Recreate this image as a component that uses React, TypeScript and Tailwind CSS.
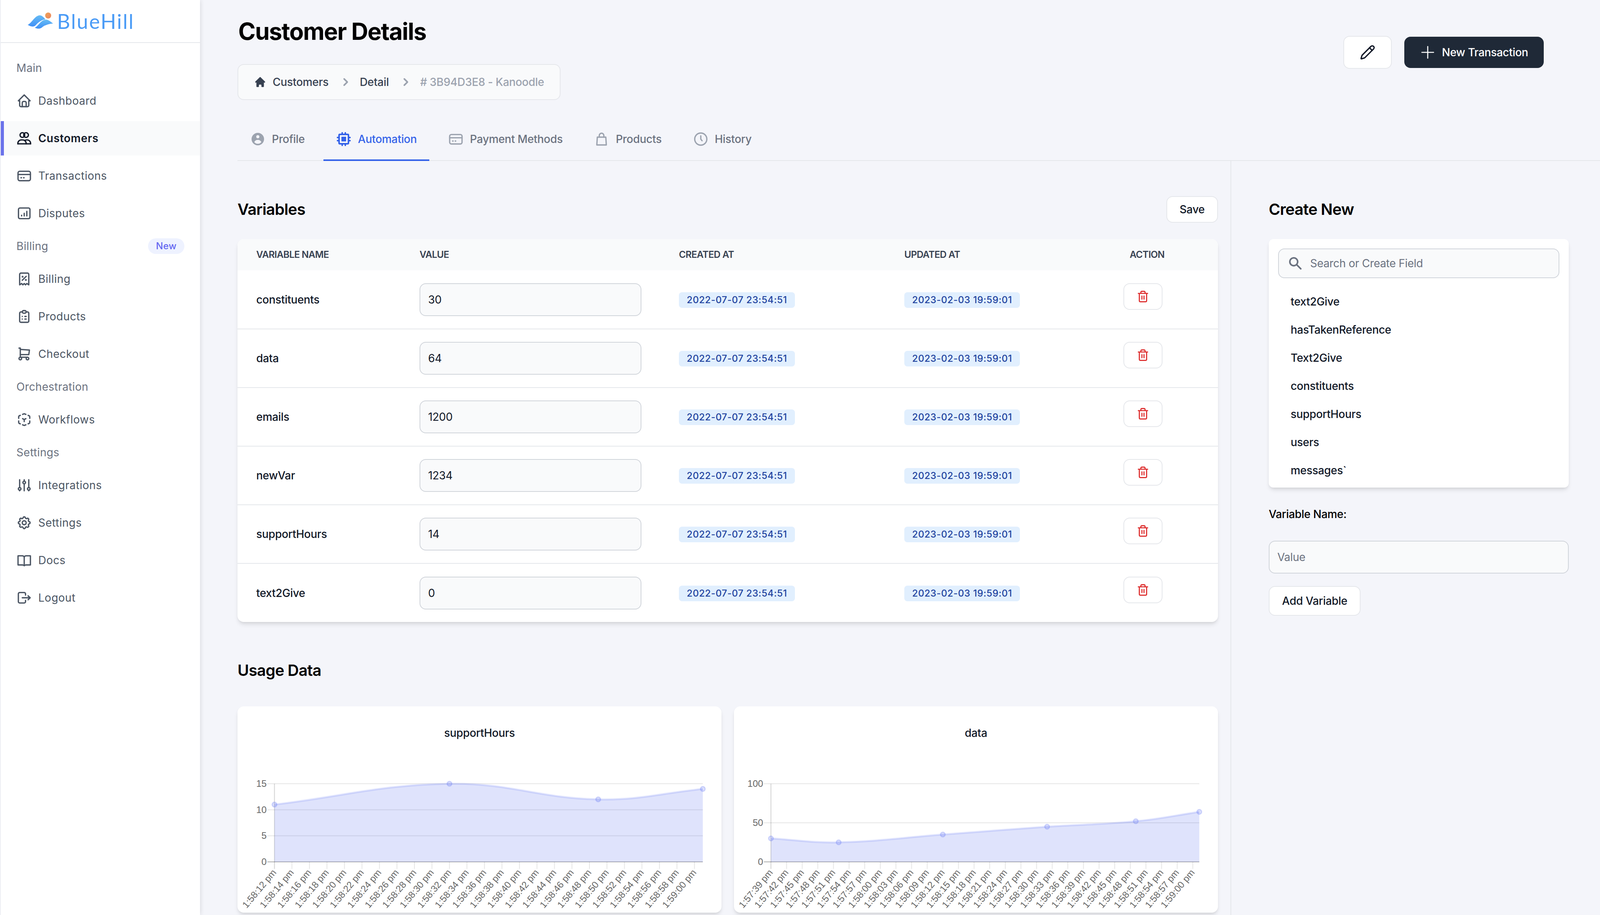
import React from "react";
import { TbHome, TbClipboardList, TbShoppingCart, TbSettings, TbReceiptTax, TbLogout } from "react-icons/tb";
import { Pencil, Trash2 } from "lucide-react";

type SvgP = { className?: string };
const Line = ({ className = "", children }: SvgP & { children: React.ReactNode }) => (
  <svg viewBox="0 0 24 24" fill="none" stroke="currentColor" strokeWidth={2} strokeLinecap="round" strokeLinejoin="round" className={className}>
    {children}
  </svg>
);
const Sol = ({ className = "", d }: SvgP & { d: string }) => (
  <svg viewBox="0 0 20 20" fill="currentColor" className={className}>
    <path fillRule="evenodd" clipRule="evenodd" d={d} />
  </svg>
);

const UsersIcon = ({ className }: SvgP) => (
  <Line className={className}>
    <circle cx="9.2" cy="7" r="3.6" />
    <circle cx="14.8" cy="7" r="3.6" />
    <path d="M2.2 20.5h19.6" />
    <path d="M2.2 20.5v-.8a5.2 5.2 0 015.2-5.2h2.4a5.2 5.2 0 015.2 5.2v.8" />
    <path d="M12.8 15.4a5 5 0 012.8-.9h1a5.2 5.2 0 015.2 5.2v.8" />
  </Line>
);
const CardIcon = ({ className }: SvgP) => (
  <Line className={className}>
    <rect x="2.5" y="5" width="19" height="14.5" rx="2.5" />
    <path d="M2.5 10h19" />
    <path d="M7 15h.8M11 15h.8" />
  </Line>
);
const BarsIcon = ({ className }: SvgP) => (
  <Line className={className}>
    <rect x="3.2" y="3.8" width="17.6" height="16.4" rx="2.2" />
    <path d="M8 16v-1M12 16v-4M16 16V9" />
  </Line>
);
const CubeIcon = ({ className }: SvgP) => (
  <Line className={className}>
    <path d="M9.5 4L12 3l2.5 1M3.5 10V7.5a1.5 1.5 0 011-1.4L6 5.5M18 5.5l1.5.6a1.5 1.5 0 011 1.4V10M20.5 14v2.5a1.5 1.5 0 01-1 1.4l-1.5.6M6 18.5l-1.5-.6a1.5 1.5 0 01-1-1.4V14M9.5 20l2.5 1 2.5-1" />
    <path d="M9.5 10.5l2.5 1.5 2.5-1.5M12 12v3" />
  </Line>
);
const SlidersIcon = ({ className }: SvgP) => (
  <Line className={className}>
    <path d="M5 3.5v12M5 19.5v1M12 3.5v2M12 10v10.5M19 3.5v12M19 19.5v1" />
    <circle cx="5" cy="17.5" r="2" />
    <circle cx="12" cy="7.8" r="2" />
    <circle cx="19" cy="17.5" r="2" />
  </Line>
);
const BookIcon = ({ className }: SvgP) => (
  <Line className={className}>
    <path d="M12 6.8v13.4" />
    <path d="M2.5 5.2h6.2a3.3 3.3 0 013.3 1.8 3.3 3.3 0 013.3-1.8h6.2v14h-7a3.2 3.2 0 00-2.5 1.2 3.2 3.2 0 00-2.5-1.2h-7z" />
  </Line>
);
const ClockIcon = ({ className }: SvgP) => (
  <Line className={className}>
    <circle cx="12" cy="12" r="9.3" />
    <path d="M12 7v5l2 2.5" />
  </Line>
);
const BagIcon = ({ className }: SvgP) => (
  <Line className={className}>
    <path d="M8.5 9V6.5a3.5 3.5 0 017 0V9" />
    <path d="M5.5 9h13l.8 12H4.7z" />
  </Line>
);

const HOME = "M10.707 2.293a1 1 0 00-1.414 0l-7 7a1 1 0 001.414 1.414L4 10.414V17a1 1 0 001 1h2a1 1 0 001-1v-2a1 1 0 011-1h2a1 1 0 011 1v2a1 1 0 001 1h2a1 1 0 001-1v-6.586l.293.293a1 1 0 001.414-1.414l-7-7z";
const CHEV = "M7.293 14.707a1 1 0 010-1.414L10.586 10 7.293 6.707a1 1 0 011.414-1.414l4 4a1 1 0 010 1.414l-4 4a1 1 0 01-1.414 0z";
const USERC = "M18 10a8 8 0 11-16 0 8 8 0 0116 0zm-6-3a2 2 0 11-4 0 2 2 0 014 0zm-2 4a5 5 0 00-4.546 2.916A5.986 5.986 0 0010 16a5.986 5.986 0 004.546-2.084A5 5 0 0010 11z";
const CHIP = "M13 7H7v6h6V7z M7 2a1 1 0 012 0v1h2V2a1 1 0 112 0v1h2a2 2 0 012 2v2h1a1 1 0 110 2h-1v2h1a1 1 0 110 2h-1v2a2 2 0 01-2 2h-2v1a1 1 0 11-2 0v-1H9v1a1 1 0 11-2 0v-1H5a2 2 0 01-2-2v-2H2a1 1 0 110-2h1V9H2a1 1 0 010-2h1V5a2 2 0 012-2h2V2zM5 5h10v10H5V5z";
const SEARCH = "M8 4a4 4 0 100 8 4 4 0 000-8zM2 8a6 6 0 1110.89 3.476l4.817 4.817a1 1 0 01-1.414 1.414l-4.816-4.816A6 6 0 012 8z";

const Logo = () => (
  <svg width="32.5" height="22" viewBox="0 0 65 44">
    <defs>
      <linearGradient id="wave" x1="0" y1="0" x2="0" y2="1">
        <stop offset="0" stopColor="#66bcf4" />
        <stop offset="1" stopColor="#3f8ff6" />
      </linearGradient>
      <linearGradient id="sun" x1="0" y1="0" x2="1" y2="1">
        <stop offset="0" stopColor="#efa356" />
        <stop offset="1" stopColor="#ea8560" />
      </linearGradient>
    </defs>
    <circle cx="52.3" cy="7.7" r="7.7" fill="url(#sun)" />
    <path fill="url(#wave)" d="M0 31.7C10 27 17 10 29 7.3c7-1.3 13 5.7 16 10.4C35 18 24 28 19 34c-6 4-13 1-19-2.3z" />
    <path fill="url(#wave)" d="M18 39c10-5 16-21 29-20.7C54 18.5 60 25 65 28.3 55 29 50 31 42 34c-6 4-10 11-24 5z" />
  </svg>
);

const SectionLabel = ({ text, badge }: { text: string; badge?: string }) => (
  <div className="h-10 pl-5 pr-5 flex items-center justify-between text-sm tracking-[0.012em] text-[#6b7280]">
    <span>{text}</span>
    {badge && <span className="px-2.5 py-0.5 rounded-full bg-[#eef2ff] text-[#6366f1] text-xs font-medium">{badge}</span>}
  </div>
);

const NavItem = ({ icon: I, text, active }: { icon: React.ComponentType<SvgP>; text: string; active?: boolean }) => (
  <div
    className={
      active
        ? "h-11 flex items-center gap-2 border-l-4 border-[#6a72ea] pl-4 bg-[#f9fafb] text-sm font-semibold tracking-wide text-[#111827]"
        : "h-11 flex items-center gap-2 pl-5 text-sm font-normal tracking-[0.018em] text-[#4b5563]"
    }
  >
    <I className="w-5 h-5 shrink-0" />
    <span>{text}</span>
  </div>
);

const Sidebar = () => (
  <aside className="w-64 h-full shrink-0 bg-white border-l border-[#eceef3] shadow-[1px_0_5px_rgba(0,0,0,0.1)] z-10">
    <div className="h-[55px] border-b border-[#e5e7eb] flex items-center pl-[34.5px] gap-[5px]">
      <Logo />
      <span className="[font-family:Lato,sans-serif] text-[26px] leading-none text-[#4a9bf6] tracking-[0.05em]">BlueHill</span>
    </div>
    <nav className="pt-3">
      <SectionLabel text="Main" />
      <div className="flex flex-col gap-1">
        <NavItem icon={TbHome} text="Dashboard" />
        <NavItem icon={UsersIcon} text="Customers" active />
        <NavItem icon={CardIcon} text="Transactions" />
        <NavItem icon={BarsIcon} text="Disputes" />
      </div>
      <SectionLabel text="Billing" badge="New" />
      <div className="flex flex-col gap-1">
        <NavItem icon={TbReceiptTax} text="Billing" />
        <NavItem icon={TbClipboardList} text="Products" />
        <NavItem icon={TbShoppingCart} text="Checkout" />
      </div>
      <SectionLabel text="Orchestration" />
      <div className="flex flex-col gap-1">
        <NavItem icon={CubeIcon} text="Workflows" />
      </div>
      <SectionLabel text="Settings" />
      <div className="flex flex-col gap-1">
        <NavItem icon={SlidersIcon} text="Integrations" />
        <NavItem icon={TbSettings} text="Settings" />
        <NavItem icon={BookIcon} text="Docs" />
        <NavItem icon={TbLogout} text="Logout" />
      </div>
    </nav>
  </aside>
);

const Header = () => (
  <header className="pl-12 pr-[79px] pt-[22px] flex justify-between items-start">
    <div>
      <h1 className="text-3xl font-bold tracking-[-0.025em] text-black pl-px">Customer Details</h1>
      <div className="mt-6 w-fit flex items-center px-5 py-3 border border-[#e5e7eb] rounded-lg bg-[#f9fafb] text-sm font-medium">
        <Sol d={HOME} className="w-4 h-4 mr-2 text-[#374151]" />
        <span className="text-[#374151]">Customers</span>
        <Sol d={CHEV} className="w-5 h-5 ml-3 mr-2 text-[#9ca3af]" />
        <span className="text-[#374151]">Detail</span>
        <Sol d={CHEV} className="w-5 h-5 ml-3 mr-2 text-[#9ca3af]" />
        <span className="text-[#9ca3af]"># 3B94D3E8 - Kanoodle</span>
      </div>
    </div>
    <div className="mt-6 flex items-center gap-4">
      <button className="px-5 py-2.5 bg-white border border-[#e5e7eb] rounded-lg text-[#111827]">
        <Pencil className="w-5 h-5" strokeWidth={2} />
      </button>
      <button className="flex items-center px-5 py-2.5 bg-[#1f2937] rounded-lg text-sm font-medium text-white">
        <svg viewBox="0 0 24 24" fill="none" stroke="currentColor" strokeWidth={1.6} strokeLinecap="round" className="w-5 h-5 mr-2">
          <path d="M12 3v18M3 12h18" />
        </svg>
        New Transaction
      </button>
    </div>
  </header>
);

const Tab = ({ icon, text, active }: { icon: React.ReactNode; text: string; active?: boolean }) => (
  <div
    className={
      active
        ? "flex items-center p-4 border-b-2 border-[#3563e9] text-sm font-medium text-[#3563e9]"
        : "flex items-center p-4 border-b-2 border-transparent text-sm font-medium text-[#6b7280]"
    }
  >
    {icon}
    <span>{text}</span>
  </div>
);

const Tabs = () => (
  <div className="mt-6 ml-12 border-b border-[#e5e7eb]">
    <div className="flex gap-2 -mb-px">
      <Tab icon={<Sol d={USERC} className="w-5 h-5 mr-2 text-[#9ca3af]" />} text="Profile" />
      <Tab active icon={<Sol d={CHIP} className="w-5 h-5 mr-2 text-[#3563e9]" />} text="Automation" />
      <Tab icon={<CardIcon className="w-5 h-5 mr-2 text-[#9ca3af]" />} text="Payment Methods" />
      <Tab icon={<BagIcon className="w-5 h-5 mr-2 text-[#9ca3af]" />} text="Products" />
      <Tab icon={<ClockIcon className="w-5 h-5 mr-2 text-[#9ca3af]" />} text="History" />
    </div>
  </div>
);

const rows: [string, string][] = [
  ["constituents", "30"],
  ["data", "64"],
  ["emails", "1200"],
  ["newVar", "1234"],
  ["supportHours", "14"],
  ["text2Give", "0"],
];

const Badge = ({ text }: { text: string }) => (
  <span className="inline-block px-2.5 py-0.5 rounded bg-[#e1effe] text-[#1e429f] text-xs font-medium whitespace-nowrap tracking-[0.025em]">{text}</span>
);

const VarTable = () => (
  <div className="mt-[21px] bg-white rounded-lg shadow-md overflow-hidden">
    <table className="w-full table-fixed text-sm text-left">
      <thead className="bg-[#f9fafb] text-xs font-semibold uppercase tracking-[-0.03em] text-[#374151]">
        <tr className="h-10">
          <th className="w-[209px] pl-6 font-semibold">Variable Name</th>
          <th className="w-[332px] pl-6 font-semibold">Value</th>
          <th className="w-[288.5px] pl-6 font-semibold">Created At</th>
          <th className="w-[288.5px] pl-6 font-semibold">Updated At</th>
          <th className="pl-6 font-semibold">Action</th>
        </tr>
      </thead>
      <tbody>
        {rows.map(([n, v], i) => (
          <tr key={n} className={i < rows.length - 1 ? "h-[75px] border-b border-[#e5e7eb]" : "h-[75px]"}>
            <td className="pl-6 font-medium text-[#111827]">{n}</td>
            <td className="pl-6">
              <input readOnly defaultValue={v} className="w-[284px] p-2.5 bg-[#f9fafb] border border-[#d1d5db] rounded-lg text-sm text-[#111827]" />
            </td>
            <td className="pl-6"><Badge text="2022-07-07 23:54:51" /></td>
            <td className="pl-6"><Badge text="2023-02-03 19:59:01" /></td>
            <td className="pl-4">
              <button className="block mb-2 px-4 py-2 bg-white border border-[#e5e7eb] rounded-lg text-[#dc2626]">
                <Trash2 className="w-4 h-4" strokeWidth={2} />
              </button>
            </td>
          </tr>
        ))}
      </tbody>
    </table>
  </div>
);

function spline(pts: [number, number][]) {
  const t = 0.4;
  let d = `M${pts[0][0]} ${pts[0][1]}`;
  const cp = pts.map((p, i) => {
    const prev = pts[Math.max(i - 1, 0)];
    const next = pts[Math.min(i + 1, pts.length - 1)];
    const d01 = Math.hypot(p[0] - prev[0], p[1] - prev[1]);
    const d12 = Math.hypot(next[0] - p[0], next[1] - p[1]);
    const s = d01 + d12 || 1;
    const fa = (t * d01) / s;
    const fb = (t * d12) / s;
    return {
      px: p[0] - fa * (next[0] - prev[0]),
      py: p[1] - fa * (next[1] - prev[1]),
      nx: p[0] + fb * (next[0] - prev[0]),
      ny: p[1] + fb * (next[1] - prev[1]),
    };
  });
  for (let i = 1; i < pts.length; i++) {
    d += ` C${cp[i - 1].nx} ${cp[i - 1].ny} ${cp[i].px} ${cp[i].py} ${pts[i][0]} ${pts[i][1]}`;
  }
  return d;
}

const X0 = 47.3;
const X1 = 595.6;
const YT = 23;
const YB = 123;

const Chart = ({ title, max, ticks, labels, step, points }: { title: string; max: number; ticks: number[]; labels: string[]; step: number; points: [number, number][] }) => {
  const y = (v: number) => YB - (v / max) * (YB - YT);
  const pts = points.map(([sx, v]) => [X0 + sx, y(v)] as [number, number]);
  const curve = spline(pts);
  const area = `${curve} L${pts[pts.length - 1][0]} ${YB} L${pts[0][0]} ${YB} Z`;
  return (
    <div className="h-[264px] bg-white rounded-lg shadow-md pt-6">
      <div className="text-center text-sm font-medium text-[#111827]">{title}</div>
      <svg width="619.5" height="188" viewBox="0 0 619.5 188" className="block mt-8 tracking-normal">
        {ticks.map((t) => (
          <g key={t}>
            <line x1={X0 - 9} x2={X1} y1={y(t)} y2={y(t)} stroke={t === 0 ? "rgba(0,0,0,0.32)" : "rgba(0,0,0,0.1)"} strokeWidth={1} />
            <text x={X0 - 10} y={y(t) + 4} textAnchor="end" fontSize="12" fill="#666" fontFamily="'Liberation Sans', Arial, sans-serif">{t}</text>
          </g>
        ))}
        <line x1={X0} x2={X0} y1={YT} y2={YB + 9} stroke="rgba(0,0,0,0.18)" strokeWidth={1} />
        {labels.map((l, i) => {
          const x = X0 + i * step;
          return (
            <g key={l + i}>
              {i > 0 && <line x1={x} x2={x} y1={YB} y2={YB + 9} stroke="rgba(0,0,0,0.1)" strokeWidth={1} />}
              <text
                x={x + 3}
                y={YB + 14}
                textAnchor="end"
                fontSize="12"
                fill="#666"
                fontFamily="'Liberation Sans', Arial, sans-serif"
                transform={`rotate(-50 ${x + 3} ${YB + 14})`}
              >
                {l}
              </text>
            </g>
          );
        })}
        <path d={area} fill="rgba(79,101,241,0.18)" />
        <path d={curve} fill="none" stroke="rgba(99,120,245,0.2)" strokeWidth={2.5} />
        {pts.map((p, i) => (
          <circle key={i} cx={p[0]} cy={p[1]} r={3} fill="rgba(90,110,245,0.2)" stroke="rgba(90,110,245,0.25)" strokeWidth={1.5} />
        ))}
      </svg>
    </div>
  );
};

const labelsA = [
  "1:58:12", "1:58:14", "1:58:16", "1:58:18", "1:58:20", "1:58:22", "1:58:24", "1:58:26", "1:58:28", "1:58:30", "1:58:32", "1:58:34", "1:58:36",
  "1:58:38", "1:58:40", "1:58:42", "1:58:44", "1:58:46", "1:58:48", "1:58:50", "1:58:52", "1:58:54", "1:58:56", "1:58:58", "1:59:00",
].map((s) => s + " pm");
const labelsB = [
  "1:57:39", "1:57:42", "1:57:45", "1:57:48", "1:57:51", "1:57:54", "1:57:57", "1:58:00", "1:58:03", "1:58:06", "1:58:09", "1:58:12", "1:58:15", "1:58:18",
  "1:58:21", "1:58:24", "1:58:27", "1:58:30", "1:58:33", "1:58:36", "1:58:39", "1:58:42", "1:58:45", "1:58:48", "1:58:51", "1:58:54", "1:58:57", "1:59:00",
].map((s) => s + " pm");

const fields = ["text2Give", "hasTakenReference", "Text2Give", "constituents", "supportHours", "users", "messages`"];

const RightPanel = () => (
  <aside className="w-[480px] shrink-0 border-l border-[#e5e7eb] pl-12 pr-[47px] pt-12">
    <h2 className="text-xl font-semibold tracking-[-0.02em] text-black">Create New</h2>
    <div className="mt-6 bg-white rounded-md shadow-md p-3 pb-1">
      <div className="relative">
        <Sol d={SEARCH} className="absolute left-3 top-[9px] w-5 h-5 text-[#6b7280]" />
        <input placeholder="Search or Create Field" className="w-full py-2 pl-10 pr-2 bg-[#f9fafb] border border-[#d1d5db] rounded-lg text-sm placeholder:text-[#6b7280]" />
      </div>
      <ul className="mt-3">
        {fields.map((f) => (
          <li key={f} className="h-9 px-4 flex items-center text-sm font-medium text-[#111827]">{f}</li>
        ))}
      </ul>
    </div>
    <div className="mt-6 text-sm font-medium text-black">Variable Name:</div>
    <input placeholder="Value" className="mt-6 w-full p-2.5 bg-[#f9fafb] border border-[#d1d5db] rounded-lg text-sm placeholder:text-[#6b7280]" />
    <button className="mt-4 block px-4 py-2 bg-white border border-[#e5e7eb] rounded-lg text-sm font-medium text-[#111827]">Add Variable</button>
  </aside>
);

export default function App() {
  return (
    <div className="[zoom:2] w-[2055px] h-[1171px] flex overflow-hidden bg-[#f4f5fa] tracking-[-0.01em] [font-family:Inter,sans-serif]">
      <Sidebar />
      <main className="flex-1 min-w-0 flex flex-col">
        <Header />
        <Tabs />
        <div className="flex flex-1 min-h-0">
          <div className="flex-1 min-w-0 pl-12 pr-4 pt-[45px]">
            <div className="h-[34px] flex items-center justify-between">
              <h2 className="text-xl font-semibold tracking-[-0.02em] text-black">Variables</h2>
              <button className="px-4 py-1.5 bg-white border border-[#e5e7eb] rounded-lg text-sm font-medium text-[#111827]">Save</button>
            </div>
            <VarTable />
            <h2 className="mt-12 text-xl font-semibold tracking-[-0.02em] text-black">Usage Data</h2>
            <div className="mt-8 grid grid-cols-2 gap-4">
              <Chart title="supportHours" max={15} ticks={[15, 10, 5, 0]} labels={labelsA} step={22.4} points={[[0, 11], [224, 15], [414.4, 12], [548.3, 14]]} />
              <Chart title="data" max={100} ticks={[100, 50, 0]} labels={labelsB} step={20} points={[[0, 30], [86.7, 25], [220, 35], [353.5, 45], [467, 52], [548.3, 64]]} />
            </div>
          </div>
          <RightPanel />
        </div>
      </main>
    </div>
  );
}
